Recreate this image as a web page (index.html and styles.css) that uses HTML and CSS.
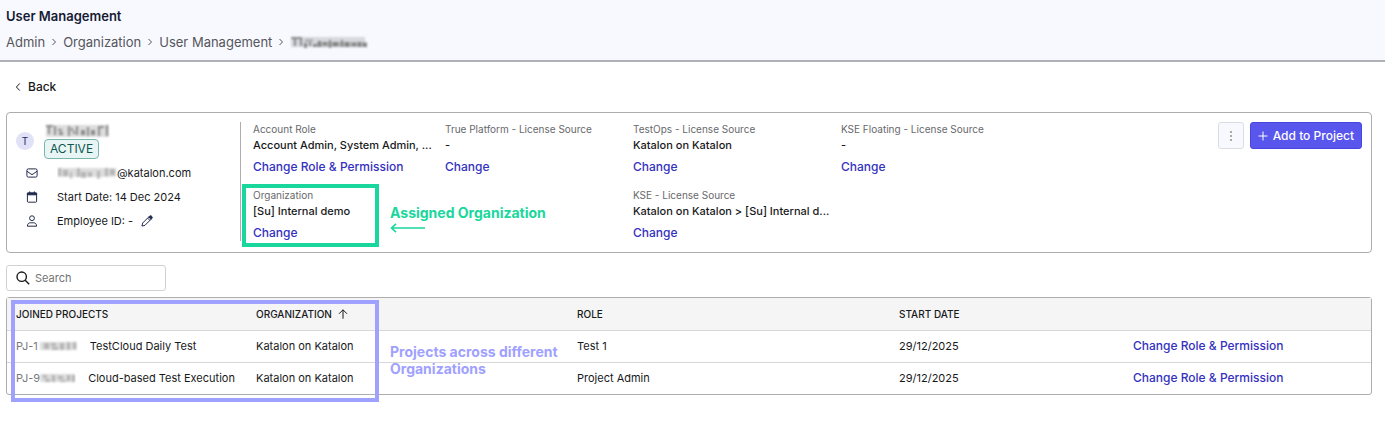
FILE: index.html
```html
<!DOCTYPE html>
<html lang="en">
<head>
<meta charset="utf-8">
<meta name="viewport" content="width=device-width, initial-scale=1">
<title>User Management</title>
<link rel="stylesheet" href="styles.css">
</head>
<body>
<header class="page-header">
  <h1 class="page-title">User Management</h1>
  <nav class="breadcrumb" aria-label="Breadcrumb">
    <a href="#">Admin</a>
    <svg class="chevron" viewBox="0 0 6 8"><path d="M1.5 1 4.5 4 1.5 7"/></svg>
    <a href="#">Organization</a>
    <svg class="chevron" viewBox="0 0 6 8"><path d="M1.5 1 4.5 4 1.5 7"/></svg>
    <a href="#">User Management</a>
    <svg class="chevron" viewBox="0 0 6 8"><path d="M1.5 1 4.5 4 1.5 7"/></svg>
    <svg class="redacted" width="80" height="16" viewBox="0 0 80 16"><g class="mosaic"><path class="m3" d="M1 3h11v2H1zM4 5h2v7H4zM10 4h2v8h-2zM14 9h3v5h-3zM19 8h2v4h-2zM23 10h4v3h-4zM28 7h3v6h-3zM33 8h4v3h-4zM39 6h2v8h-2zM43 8h5v4h-5zM51 6h2v7h-2zM55 8h4v5h-4zM62 9h4v3h-4zM68 8h3v5h-3zM73 9h4v4h-4z"/><path class="m2" d="M15 5h8v3h-8zM27 8h50v5H27z"/><path class="m1" d="M1 3h74v10H1z"/></g></svg>
  </nav>
</header>
<main class="content">
  <a class="back" href="#"><svg class="back-icon" viewBox="0 0 6 10"><path d="M4.8 1.4 1.4 5l3.4 3.6"/></svg>Back</a>

  <section class="user-card">
    <div class="profile">
      <div class="identity">
        <span class="avatar">T</span>
        <div class="identity-text">
          <svg class="redacted" width="66" height="16" viewBox="0 0 66 16"><g class="mosaic"><path class="m3" d="M2 2h7v2H2zM4 4h2v7H4zM10 3h2v9h-2zM14 6h4v2h-4zM15 9h4v3h-4zM24 3h2v10h-2zM27 5h2v3h-2zM29 8h2v3h-2zM32 3h2v9h-2zM37 7h4v5h-4zM43 4h2v9h-2zM47 7h4v5h-4zM54 3h6v2h-6zM54 5h2v8h-2zM62 2h2v11h-2z"/><path class="m1" d="M2 2h63v12H2z"/></g></svg>
          <span class="status">ACTIVE</span>
        </div>
      </div>
      <ul class="facts">
        <li>
          <svg class="fact-icon" viewBox="0 0 12 12"><rect x=".9" y="1.9" width="10.2" height="8.2" rx="1.4"/><path d="M1 4.2 5 7.1Q6 7.8 7 7.1L11 4.2"/></svg>
          <span class="email"><svg class="redacted" width="60" height="14" viewBox="0 0 60 14"><g class="mosaic"><path class="m2" d="M1 2h3v8H1zM6 4h5v6H6zM13 6h2v7h-2zM20 2h3v9h-3zM24 6h5v6h-5zM31 6h4v5h-4zM40 5h3v8h-3zM48 2h3v8h-3zM53 3h5v6h-5z"/><path class="m1" d="M1 2h58v9H1z"/></g></svg>@katalon.com</span>
        </li>
        <li>
          <svg class="fact-icon" viewBox="0 0 12 12"><rect x="1.4" y="2" width="9.2" height="9.2" rx="1"/><path class="solid" d="M1.4 2h9.2v1.8H1.4z"/><path d="M3.7.4V2M8.3.4V2"/></svg>
          <span>Start Date: 14 Dec 2024</span>
        </li>
        <li>
          <svg class="fact-icon" viewBox="0 0 12 12"><circle cx="6" cy="3.2" r="2.4"/><path d="M1.4 11.2C1.4 8.8 2.8 7.8 4.2 7.8h3.6c1.4 0 2.8 1 2.8 3.4z"/></svg>
          <span>Employee ID: -</span>
          <button class="edit" type="button" aria-label="Edit employee ID"><svg viewBox="0 0 12 12"><path d="M.9 11.1 1.7 8 7.8 1.9 10.1 4.2 4 10.3zM6.6 3.1l2.3 2.3"/><path class="solid" d="m7.8 1.9 1-1Q9.6.4 10.3 1l.7.7q.6.7 0 1.5l-1 1z"/></svg></button>
        </li>
      </ul>
    </div>

    <div class="fields">
      <div class="field"><span class="label">Account Role</span><span class="value">Account Admin, System Admin, ...</span><a href="#" class="action">Change Role &amp; Permission</a></div>
      <div class="field"><span class="label">True Platform - License Source</span><span class="value">-</span><a href="#" class="action">Change</a></div>
      <div class="field"><span class="label">TestOps - License Source</span><span class="value">Katalon on Katalon</span><a href="#" class="action">Change</a></div>
      <div class="field"><span class="label">KSE Floating - License Source</span><span class="value">-</span><a href="#" class="action">Change</a></div>
      <div class="field highlighted"><span class="label">Organization</span><span class="value">[Su] Internal demo</span><a href="#" class="action">Change</a>
        <div class="note note-green">Assigned Organization<svg class="note-arrow" viewBox="0 0 36 10"><path d="M35 5H1.5M6 .8 1.5 5 6 9.2"/></svg></div>
      </div>
      <div class="field field-kse"><span class="label">KSE - License Source</span><span class="value">Katalon on Katalon &gt; [Su] Internal d...</span><a href="#" class="action">Change</a></div>
    </div>

    <div class="card-actions">
      <button class="more" type="button" aria-label="More actions"><svg viewBox="0 0 4 12"><circle cx="2" cy="2" r="1.1"/><circle cx="2" cy="6" r="1.1"/><circle cx="2" cy="10" r="1.1"/></svg></button>
      <button class="add" type="button"><svg viewBox="0 0 10 10"><path d="M5 .5v9M.5 5h9"/></svg>Add to Project</button>
    </div>
  </section>

  <label class="search">
    <svg viewBox="0 0 14 14"><circle cx="5.7" cy="5.7" r="4.7"/><path d="m9.2 9.2 4 4"/></svg>
    <input type="search" placeholder="Search" aria-label="Search">
  </label>

  <section class="projects">
    <table>
      <colgroup><col class="col-project"><col class="col-org"><col class="col-role"><col class="col-date"><col></colgroup>
      <thead>
        <tr><th>JOINED PROJECTS</th><th>ORGANIZATION<svg class="sort" viewBox="0 0 10 10"><path d="M5 9.7V.8M1 4.8l4-4 4 4"/></svg></th><th>ROLE</th><th>START DATE</th><th></th></tr>
      </thead>
      <tbody>
        <tr>
          <td><span class="project"><span class="code">PJ-1<svg class="redacted" width="40" height="14" viewBox="0 0 40 14"><g class="mosaic"><path class="m2" d="M6 4h5v6H6zM13 4h5v3h-5zM14 8h6v3h-6zM22 4h4v7h-4zM29 3h3v8h-3zM35 3h3v7h-3z"/><path class="m1" d="M2 3h37v8H2z"/></g></svg></span>TestCloud Daily Test</span></td>
          <td>Katalon on Katalon</td><td>Test 1</td><td>29/12/2025</td><td><a href="#" class="action">Change Role &amp; Permission</a></td>
        </tr>
        <tr>
          <td><span class="project"><span class="code">PJ-9<svg class="redacted" width="36" height="14" viewBox="0 0 36 14"><g class="mosaic"><path class="m2" d="M3 4h4v3H3zM5 8h5v3H5zM12 4h3v7h-3zM18 5h5v3h-5zM20 9h6v2h-6zM27 4h3v6h-3zM32 4h3v7h-3z"/><path class="m1" d="M0 3h35v8H0z"/></g></svg></span>Cloud-based Test Execution</span></td>
          <td>Katalon on Katalon</td><td>Project Admin</td><td>29/12/2025</td><td><a href="#" class="action">Change Role &amp; Permission</a></td>
        </tr>
      </tbody>
    </table>
    <div class="outline-purple"></div>
    <div class="note note-purple">Projects across different<br>Organizations</div>
  </section>
</main>
</body>
</html>
```
FILE: styles.css
```css
* { box-sizing: border-box; }

body {
  margin: 0;
  background: #fff;
  color: #18191b;
  font: 12px/16px Inter, "Liberation Sans", sans-serif;
}

a { color: inherit; text-decoration: none; }
button { font: inherit; cursor: pointer; }
svg { display: block; flex: none; fill: none; stroke: currentColor; }

.page-header {
  padding: 8px 6px 10px;
  border-bottom: 2px solid #b0b1b7;
  background: #f8f9ff;
}
.page-title {
  margin: 0;
  color: #161b33;
  font-size: 13px;
  font-weight: 600;
  line-height: 16px;
}
.breadcrumb {
  display: flex;
  align-items: center;
  gap: 6px;
  margin-top: 10px;
  color: #55565b;
  font-size: 13px;
  line-height: 16px;
}
.chevron { width: 6px; height: 8px; }

/* Masked personal data */
.redacted { stroke: none; }
.mosaic { filter: blur(1px); }
.m1 { fill: #777; opacity: .25; }
.m2 { fill: #777; opacity: .4; }
.m3 { fill: #555; opacity: .65; }

.content { padding: 17px 13px 32px 6px; }
.back {
  display: flex;
  align-items: center;
  gap: 7px;
  width: max-content;
  padding-left: 9px;
  font-weight: 500;
}
.back-icon { width: 6px; height: 10px; }

.user-card {
  display: flex;
  margin-top: 17px;
  padding: 9px 9px 11px;
  border: 1px solid #adadad;
  border-radius: 4px;
}
.profile {
  flex: none;
  width: 225px;
  border-right: 1px solid #adadad;
}
.identity { display: flex; align-items: center; gap: 10px; padding-top: 1px; }
.avatar {
  width: 18px;
  height: 18px;
  border-radius: 50%;
  background: #e1e1f7;
  color: #252c65;
  font-size: 10px;
  line-height: 18px;
  text-align: center;
}
.status {
  display: block;
  width: max-content;
  padding: 1px 5px;
  border: 1px solid #78b5ae;
  border-radius: 4px;
  background: #e8f5f4;
  color: #0e5650;
}
.facts {
  display: flex;
  flex-direction: column;
  gap: 8px;
  margin: 6px 0 0;
  padding: 0 0 0 10px;
  list-style: none;
  font-size: 11px;
}
.facts li { display: flex; align-items: center; }
.fact-icon { width: 12px; height: 12px; margin-right: 19px; color: #232b4e; }
.email { display: flex; align-items: center; }
.solid { fill: currentColor; }
.edit { margin-left: 8px; padding: 0; border: 0; background: none; color: #232b4e; }
.edit svg { width: 12px; height: 12px; }

.fields {
  display: grid;
  flex: 1;
  grid-template-columns: 192px 188px 208px 1fr;
  gap: 13px 0;
  align-content: start;
  padding-left: 12px;
}
.field { display: flex; flex-direction: column; align-items: flex-start; white-space: nowrap; }
.label { color: #68696c; font-size: 10px; line-height: 15px; }
.value { font-size: 11px; font-weight: 500; }
.action { color: #3431c0; font-size: 12px; font-weight: 500; }
.field .action { margin-top: 6px; }
.field-kse { grid-column: 3; }

.highlighted { position: relative; }
.highlighted::before {
  content: "";
  position: absolute;
  inset: -4px 66px -6px -11px;
  border: 4px solid #19d79c;
}
.note { position: absolute; font-size: 14px; font-weight: 700; line-height: 17px; white-space: nowrap; }
.note-green { top: 16px; left: 137px; color: #19d79c; }
.note-arrow { width: 36px; height: 10px; margin-top: 2px; stroke-width: 1.6; }

.card-actions { display: flex; align-items: flex-start; gap: 6px; }
.more, .add {
  display: flex;
  align-items: center;
  justify-content: center;
  height: 27px;
  border-radius: 3px;
}
.more { width: 26px; padding: 0; border: 1px solid #dcdde4; background: #f8f9ff; color: #96979b; }
.more svg { width: 4px; height: 12px; fill: currentColor; stroke: none; }
.add { gap: 5px; padding: 0 7px; border: 1px solid #4846e0; background: #5856ec; color: #fff; font-weight: 500; }
.add svg { width: 10px; height: 10px; }

.search {
  display: flex;
  align-items: center;
  gap: 5px;
  width: 160px;
  height: 26px;
  margin: 12px 0 6px;
  padding: 0 9px;
  border: 1px solid #d2d2d4;
  border-radius: 3px;
}
.search svg { width: 14px; height: 14px; stroke-width: 1.4; }
.search input { width: 100%; min-width: 0; padding: 0; border: 0; outline: 0; background: none; font: inherit; font-size: 11px; }
.search input::placeholder { color: #727376; opacity: 1; }

.projects { position: relative; border: 1px solid #adadad; border-radius: 3px; }
table { width: 100%; border-collapse: collapse; table-layout: fixed; font-size: 11px; }
.col-project { width: 240px; }
.col-org { width: 321px; }
.col-role { width: 322px; }
.col-date { width: 234px; }
th, td { height: 32px; padding: 0 9px; text-align: left; white-space: nowrap; }
th { background: #f5f5f5; font-size: 10px; font-weight: 500; }
td { border-top: 1px solid #d8d8d8; }
.sort { display: inline-block; width: 10px; height: 10px; margin-left: 6px; vertical-align: -1px; }
.project { display: flex; align-items: center; gap: 12px; }
.code { display: flex; align-items: center; color: #77787b; }

.outline-purple {
  position: absolute;
  inset: 2px auto -8px 4px;
  width: 368px;
  border: 4px solid #9fa1ff;
}
.note-purple { top: 45px; left: 383px; color: #9fa1ff; }
```
